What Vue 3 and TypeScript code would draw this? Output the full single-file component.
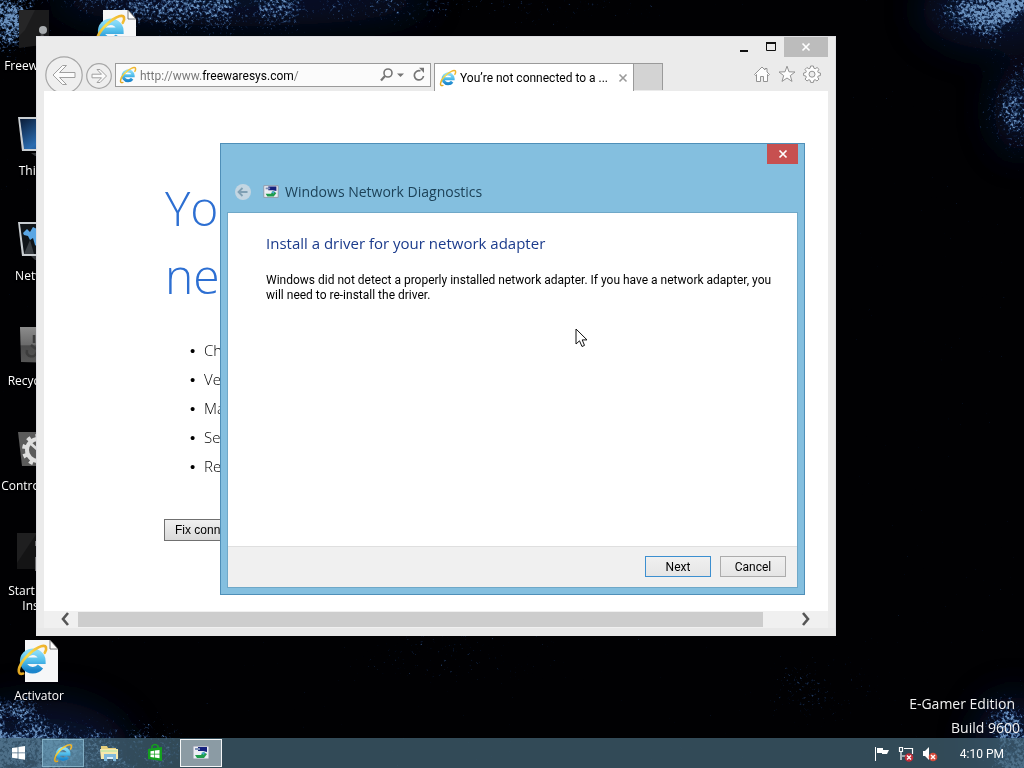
<script setup lang="ts">
interface DesktopItem {
  label: string
  icon: string
}

const desktopItems: DesktopItem[] = [
  { label: 'Freewaresys', icon: 'i-dark' },
  { label: 'This PC', icon: 'i-pc' },
  { label: 'Network', icon: 'i-net' },
  { label: 'Recycle Bin', icon: 'i-bin' },
  { label: 'Control Panel', icon: 'i-panel' },
  { label: 'Start in the Install', icon: 'i-start' },
  { label: 'Activator', icon: 'i-iepage' },
  { label: '', icon: 'i-iepage' },
]

const tips: string[] = [
  'Check that all network cables are plugged in.',
  'Verify that airplane mode is turned off.',
  'Make sure your wireless switch is turned on.',
  'See if you can connect to mobile broadband.',
  'Restart your router.',
]

interface TaskButton {
  name: string
  icon: string
  state: string
}

const taskButtons: TaskButton[] = [
  { name: 'Internet Explorer', icon: 'i-ie', state: 'open' },
  { name: 'File Explorer', icon: 'i-folder', state: '' },
  { name: 'Store', icon: 'i-store', state: '' },
  { name: 'Windows Network Diagnostics', icon: 'i-diag', state: 'active' },
]
</script>

<template>
  <div class="screen">
    <svg class="defs" aria-hidden="true">
      <defs>
        <linearGradient id="g-ie" x1="0" y1="0" x2="0" y2="1">
          <stop offset="0" stop-color="#8adcf8" />
          <stop offset="0.5" stop-color="#4fbcea" />
          <stop offset="1" stop-color="#1c86cc" />
        </linearGradient>
        <linearGradient id="g-gold" x1="0" y1="1" x2="1" y2="0">
          <stop offset="0" stop-color="#e0a21c" />
          <stop offset="0.5" stop-color="#fbe04e" />
          <stop offset="1" stop-color="#eeb02a" />
        </linearGradient>
        <linearGradient id="g-screen" x1="0" y1="0" x2="1" y2="1">
          <stop offset="0" stop-color="#0a1c38" />
          <stop offset="0.6" stop-color="#2a6cb0" />
          <stop offset="1" stop-color="#143a6c" />
        </linearGradient>
        <linearGradient id="g-bin" x1="0" y1="0" x2="0" y2="1">
          <stop offset="0" stop-color="#8c8c8c" />
          <stop offset="0.5" stop-color="#6a6a6a" />
          <stop offset="0.52" stop-color="#4a4a4a" />
          <stop offset="1" stop-color="#565656" />
        </linearGradient>
      </defs>
      <symbol id="i-ie" viewBox="0 0 32 32">
        <path d="M9 17.500H25.200A9 8.700 0 1 0 23.400 22.600" fill="none" stroke="url(#g-ie)" stroke-width="5.400" />
        <path d="M7 29.200C.4 31.500 1.400 22 9.600 13.400C17.800 4.800 28 .3 29.400 4.200C30 6 29.200 8 28.200 9.600" fill="none" stroke="url(#g-gold)" stroke-width="2.600" stroke-linecap="round" />
      </symbol>
      <symbol id="i-iepage" viewBox="0 0 48 48">
        <path d="M10 2H35L43 11V44H10Z" fill="#f6f7f8" />
        <path d="M35 2V11H43Z" fill="#fff" stroke="#555" stroke-width="0.8" />
        <g transform="translate(1 5) scale(1.02)">
          <path d="M9 17.500H25.800A9.400 9 0 1 0 24 23" fill="none" stroke="url(#g-ie)" stroke-width="6.400" />
          <path d="M7 30C.4 32 1.400 23 9.600 14C17.800 5 28 .3 29.400 4.200C30 6 29.200 8 28.200 9.600" fill="none" stroke="url(#g-gold)" stroke-width="2.600" stroke-linecap="round" />
        </g>
      </symbol>
      <symbol id="i-dark" viewBox="0 0 48 48">
        <path d="M4 2H34V36L4 40Z" fill="#1b1b1c" />
        <path d="M4 2H20L10 22L4 28Z" fill="#262627" />
        <circle cx="28" cy="22" r="4" fill="#a9adb0" />
        <path d="M27 26L29 44" stroke="#48484a" stroke-width="3" />
      </symbol>
      <symbol id="i-pc" viewBox="0 0 48 48">
        <path d="M3 4H46V38H7Z" fill="#c9ced2" />
        <path d="M5 6H46V36H9Z" fill="url(#g-screen)" />
        <path d="M16 40H40V43H20Z" fill="#33363a" />
      </symbol>
      <symbol id="i-net" viewBox="0 0 48 48">
        <path d="M3 4H46V38H7Z" fill="#c9ced2" />
        <path d="M5 6H46V36H9Z" fill="#101418" />
        <path d="M8 15L12 11L15 14L18 9L24 12V30L20 27L18 20L15 22L13 18L9 17Z" fill="#5aa6e4" />
        <path d="M9 36L15 22L19 36Z" fill="#3a3f44" />
        <path d="M16 38H40V42H20Z" fill="#33363a" />
      </symbol>
      <symbol id="i-bin" viewBox="0 0 48 48">
        <path d="M5 4H42V40L6 39Z" fill="url(#g-bin)" />
        <path d="M19 12V20M12 27C10 34 20 36 22 29M16 22L21 26" fill="none" stroke="#3c3c3c" stroke-width="2.500" />
      </symbol>
      <symbol id="i-panel" viewBox="0 0 48 48">
        <path d="M3 4H44V38H7Z" fill="#5b5b5b" />
        <circle cx="23" cy="22" r="11" fill="none" stroke="#dedede" stroke-width="4" />
        <circle cx="23" cy="22" r="14" fill="none" stroke="#dedede" stroke-width="4" stroke-dasharray="4 5" />
        <path d="M23 22L14 14M23 22L23 10" stroke="#dedede" stroke-width="3" />
      </symbol>
      <symbol id="i-start" viewBox="0 0 48 48">
        <path d="M2 0H40V36H2Z" fill="#141415" />
        <path d="M2 0H22L10 18L2 30Z" fill="#1f1f20" />
        <path d="M21 8V13M21 24V38" stroke="#6a6a6c" stroke-width="2" />
      </symbol>
      <symbol id="i-folder" viewBox="0 0 20 20">
        <path d="M2 3H8L9 5H17V8H2Z" fill="#e7cf7c" />
        <path d="M1 6H19V16H2Z" fill="#f6e8ac" />
        <path d="M2 7H18V9H2Z" fill="#cfe6a8" />
        <path d="M5 11H17V18H14V14H8V18H5Z" fill="#7fb8dc" />
        <path d="M8 14H14V16H8Z" fill="#d8ecf8" />
      </symbol>
      <symbol id="i-store" viewBox="0 0 20 20">
        <path d="M3 6L17 4V18L3 16Z" fill="#14a01e" />
        <path d="M7 6V3Q10 0 13 3V5" fill="none" stroke="#14a01e" stroke-width="1.500" />
        <path d="M5.500 8.200L9 7.700V10.700H5.500ZM9.700 7.600L14.500 6.900V10.700H9.700ZM5.500 11.400H9V14.400L5.500 13.900ZM9.700 11.400H14.500V15.200L9.700 14.500Z" fill="#fff" />
      </symbol>
      <symbol id="i-diag" viewBox="0 0 20 20">
        <path d="M2 3H18V16H2Z" fill="#eceef4" stroke="#8f96a6" stroke-width="1" />
        <path d="M7 4H16V9L12 8L7 8Z" fill="#15207e" />
        <path d="M4 5H9V7H4Z" fill="#7d8fb8" />
        <path d="M4 12L10 12L12 9L16 11L13 15H6Z" fill="#1f9c4c" />
        <path d="M10 10L14 9L13 12Z" fill="#4aa8d8" />
      </symbol>
    </svg>

    <svg class="wallpaper" viewBox="0 0 1024 768" preserveAspectRatio="none" aria-hidden="true">
      <defs>
        <filter id="f-dust" filterUnits="userSpaceOnUse" x="0" y="0" width="1024" height="768" color-interpolation-filters="sRGB">
          <feGaussianBlur in="SourceGraphic" stdDeviation="16" result="cloud" />
          <feTurbulence type="fractalNoise" baseFrequency="0.03" numOctaves="4" seed="23" />
          <feColorMatrix type="matrix" values="2.500 0 0 0 -0.5  2.500 0 0 0 -0.5  2.500 0 0 0 -0.5  0 0 0 0 1" result="patch" />
          <feComposite in="cloud" in2="patch" operator="arithmetic" k1="0.9" k2="0.2" result="shape" />
          <feTurbulence type="fractalNoise" baseFrequency="0.34" numOctaves="3" seed="7" />
          <feColorMatrix type="matrix" values="0.900 0 0 0 -0.1  0.900 0 0 0 -0.1  0.900 0 0 0 -0.1  0 0 0 0 1" result="grain" />
          <feComposite in="shape" in2="grain" operator="arithmetic" k2="0.62" k3="1" />
          <feColorMatrix type="matrix" values="1.200 0 0 0 -0.78  1.300 0 0 0 -0.73  1.200 0 0 0 -0.46  3.200 0 0 0 -2.050" />
        </filter>
        <filter id="f-soft" x="-50%" y="-50%" width="200%" height="200%">
          <feGaussianBlur stdDeviation="18" />
        </filter>
      </defs>
      <rect width="1024" height="768" fill="#010103" />
      <g filter="url(#f-soft)" fill="#0c1a44" opacity="0.6">
        <ellipse cx="240" cy="0" rx="190" ry="26" />
        <ellipse cx="1000" cy="10" rx="80" ry="40" />
        <ellipse cx="1020" cy="110" rx="26" ry="44" />
        <ellipse cx="40" cy="750" rx="90" ry="50" />
        <ellipse cx="1014" cy="745" rx="40" ry="50" />
      </g>
      <g filter="url(#f-dust)" fill="#fff">
        <ellipse cx="4" cy="16" rx="38" ry="34" />
        <ellipse cx="200" cy="4" rx="150" ry="24" opacity="0.8" />
        <ellipse cx="400" cy="0" rx="60" ry="18" opacity="0.6" />
        <ellipse cx="560" cy="0" rx="120" ry="14" opacity="0.4" />
        <ellipse cx="1004" cy="8" rx="66" ry="30" />
        <ellipse cx="1024" cy="105" rx="30" ry="44" opacity="0.9" />
        <ellipse cx="6" cy="750" rx="60" ry="52" />
        <ellipse cx="110" cy="755" rx="80" ry="34" opacity="0.7" />
        <ellipse cx="1020" cy="748" rx="36" ry="52" />
        <ellipse cx="820" cy="690" rx="60" ry="24" opacity="0.4" />
        <ellipse cx="450" cy="655" rx="110" ry="16" opacity="0.4" />
      </g>
    </svg>

    <main class="desktop">
      <ul class="shortcuts">
        <li v-for="(item, i) in desktopItems" :key="i">
          <svg class="shortcut-icon"><use :href="'#' + item.icon" /></svg>
          <span>{{ item.label }}</span>
        </li>
      </ul>

      <div class="watermark">
        <p class="edition">E-Gamer Edition</p>
        <p>Build 9600</p>
      </div>

      <section class="browser" aria-label="Internet Explorer">
        <div class="caption">
          <button class="cap-btn" aria-label="Minimize">
            <svg width="12" height="12"><path d="M2 9H10V11H2Z" fill="#111" /></svg>
          </button>
          <button class="cap-btn" aria-label="Maximize">
            <svg width="12" height="12"><path d="M1.500 2H10.500V9.500H1.500Z" fill="none" stroke="#111" /><path d="M1 1H11V3H1Z" fill="#111" /></svg>
          </button>
          <button class="cap-btn cap-close" aria-label="Close">
            <svg width="12" height="12"><path d="M2.500 2.500L9.500 9.500M9.500 2.500L2.500 9.500" stroke="#fff" stroke-width="1.700" /></svg>
          </button>
        </div>

        <div class="toolbar">
          <button class="nav-btn nav-back" aria-label="Back">
            <svg width="38" height="38">
              <circle cx="19" cy="19" r="18.200" fill="#efefef" stroke="#a6a6a6" stroke-width="1.200" />
              <path d="M8 19L17.500 9.500H21.500L14.500 16.500H30V21.500H14.500L21.500 28.500H17.500Z" fill="#fbfbfb" stroke="#a0a0a0" />
            </svg>
          </button>
          <button class="nav-btn" aria-label="Forward">
            <svg width="26" height="26">
              <circle cx="13" cy="13" r="12.300" fill="#efefef" stroke="#a6a6a6" stroke-width="1.200" />
              <path d="M20.500 13L14 6.500H11L15.500 11.200H6V14.800H15.500L11 19.500H14Z" fill="#fbfbfb" stroke="#a0a0a0" />
            </svg>
          </button>
          <div class="address">
            <svg class="ie-small"><use href="#i-ie" /></svg>
            <input class="url" type="text" aria-label="Address" value="http://www.freewaresys.com/" />
            <button class="icon-btn" aria-label="Search">
              <svg width="16" height="16"><circle cx="9" cy="6" r="4" fill="none" stroke="#757575" stroke-width="1.600" /><path d="M6 9L2 13.500" stroke="#757575" stroke-width="2.200" /></svg>
            </button>
            <button class="icon-btn options" aria-label="Search options">
              <svg width="12" height="16"><path d="M2 6.500H9L5.500 10Z" fill="#757575" /></svg>
            </button>
            <button class="icon-btn" aria-label="Refresh">
              <svg width="16" height="16"><path d="M12.500 9A4.600 4.600 0 1 1 9.500 4" fill="none" stroke="#757575" stroke-width="1.700" /><path d="M8 .8H13V6Z" fill="#757575" /></svg>
            </button>
          </div>
          <div class="tab">
            <svg class="ie-small"><use href="#i-ie" /></svg>
            <span class="tab-title">You’re not connected to a ...</span>
            <button class="icon-btn" aria-label="Close tab">
              <svg width="12" height="12"><path d="M2.500 2.500L9.500 9.500M9.500 2.500L2.500 9.500" stroke="#9a9a9a" stroke-width="1.600" /></svg>
            </button>
          </div>
          <button class="new-tab" aria-label="New tab"></button>
          <div class="tools">
            <button class="icon-btn" aria-label="Home">
              <svg width="18" height="18"><path d="M1.500 9.500L9 2L12 5V3.500H14V7L16.500 9.500L15.500 10.500L14.500 9.500V16.500H10.500V11.500H7.500V16.500H3.500V9.500L2.500 10.500Z" fill="#fdfdfd" stroke="#939393" /></svg>
            </button>
            <button class="icon-btn" aria-label="Favorites">
              <svg width="18" height="18"><path d="M9 1.200L11 6.800L17 7L12.300 10.600L14 16.400L9 13L4 16.400L5.700 10.600L1 7L7 6.800Z" fill="#fdfdfd" stroke="#939393" /></svg>
            </button>
            <button class="icon-btn" aria-label="Tools">
              <svg width="18" height="18"><path d="M7.600 1H10.400L10.900 3.200L12.200 3.700L14.100 2.500L16 4.400L14.700 6.200L15.200 7.500L17.400 8V10.500L15.200 11L14.700 12.200L15.900 14.100L14 16L12.100 14.700L10.900 15.200L10.400 17.400H7.600L7.100 15.200L5.900 14.700L4 16L2.100 14.100L3.300 12.200L2.800 11L.6 10.500V8L2.800 7.500L3.300 6.200L2 4.400L3.900 2.500L5.800 3.700L7.100 3.200Z" fill="#fdfdfd" stroke="#939393" /><circle cx="9" cy="9.200" r="3" fill="#ececec" stroke="#939393" /></svg>
            </button>
          </div>
        </div>

        <div class="viewport">
          <article class="page">
            <h1>You’re not connected to a<br />network</h1>
            <ul class="tips">
              <li v-for="tip in tips" :key="tip">{{ tip }}</li>
            </ul>
            <button class="fix">Fix connection problems</button>
          </article>
          <div class="scrollbar">
            <button class="icon-btn arrow-left" aria-label="Scroll left">
              <svg width="12" height="14"><path d="M9 1L4 7L9 13" fill="none" stroke="#555" stroke-width="2.600" /></svg>
            </button>
            <div class="track"><div class="thumb"></div></div>
            <button class="icon-btn arrow-right" aria-label="Scroll right">
              <svg width="12" height="14"><path d="M3 1L8 7L3 13" fill="none" stroke="#555" stroke-width="2.600" /></svg>
            </button>
          </div>
        </div>
      </section>

      <section class="dialog" role="dialog" aria-labelledby="dlg-title">
        <div class="dlg-caption">
          <button class="dlg-close" aria-label="Close">
            <svg width="12" height="12"><path d="M2.500 2.500L9.500 9.500M9.500 2.500L2.500 9.500" stroke="#fff" stroke-width="1.700" /></svg>
          </button>
        </div>
        <header class="dlg-header">
          <button class="icon-btn" aria-label="Previous step">
            <svg width="18" height="18"><circle cx="9" cy="9" r="8" fill="#c3d6e2" /><path d="M4.500 9H13.500M8.500 5L4.500 9L8.500 13" fill="none" stroke="#7fa0b4" stroke-width="1.800" /></svg>
          </button>
          <svg class="dlg-icon"><use href="#i-diag" /></svg>
          <h2 id="dlg-title">Windows Network Diagnostics</h2>
        </header>
        <div class="dlg-client">
          <div class="dlg-body">
            <h3>Install a driver for your network adapter</h3>
            <p>Windows did not detect a properly installed network adapter. If you have a network adapter, you<br />will need to re-install the driver.</p>
          </div>
          <footer class="dlg-footer">
            <button class="push push-default">Next</button>
            <button class="push">Cancel</button>
          </footer>
        </div>
      </section>

      <svg class="cursor" width="14" height="20" aria-hidden="true">
        <path d="M1 1V16L4.500 12.800L7 18.500L9.500 17.400L7.200 11.900H12Z" fill="#fff" stroke="#111" />
      </svg>
    </main>

    <nav class="taskbar">
      <button class="task start" aria-label="Start">
        <svg width="14" height="14"><path d="M0 2L5.600 1.200V6.500H0ZM6.400 1.100L13 0V6.500H6.400ZM0 7.300H5.600V12.600L0 11.800ZM6.400 7.300H13V13.800L6.400 12.700Z" fill="#fff" /></svg>
      </button>
      <button v-for="b in taskButtons" :key="b.name" class="task" :class="b.state" :aria-label="b.name">
        <svg class="task-icon"><use :href="'#' + b.icon" /></svg>
      </button>
      <div class="tray">
        <svg width="16" height="16"><path d="M1 1H2V15H1Z" fill="#fff" /><path d="M3 2H9V4H15L13 8H8V7H3Z" fill="#fff" /></svg>
        <svg width="16" height="16">
          <path d="M1.500 1.500H4.500V5.500H1.500ZM3 6V14M6 2.500H14.500V8M4 10H8" fill="none" stroke="#fff" stroke-width="1.200" />
          <circle cx="11" cy="11.500" r="4.300" fill="#c22c38" /><path d="M9 9.500L13 13.500M13 9.500L9 13.500" stroke="#fff" stroke-width="1.400" />
        </svg>
        <svg width="16" height="16">
          <path d="M1 5H3L7 1V14L3 10H1Z" fill="#fff" />
          <circle cx="11" cy="11" r="4.300" fill="#d64a3a" /><path d="M9 9L13 13M13 9L9 13" stroke="#fff" stroke-width="1.400" />
        </svg>
        <time>4:10 PM</time>
      </div>
    </nav>
  </div>
</template>

<style>
html,
body {
  margin: 0;
  background: #000;
}
</style>

<style scoped>
.screen {
  position: relative;
  display: flex;
  flex-direction: column;
  height: 100vh;
  overflow: hidden;
  font: 12px/15px Roboto, "Open Sans", sans-serif;
  color: #000;
}
.screen * {
  box-sizing: border-box;
}
.defs {
  position: absolute;
  width: 0;
  height: 0;
}
.wallpaper {
  position: absolute;
  inset: 0;
  width: 100%;
  height: 100%;
}
button {
  font: inherit;
  padding: 0;
  border: 0;
  background: none;
  color: inherit;
}
svg {
  display: block;
  flex: none;
}
h1,
h2,
h3,
p,
ul {
  margin: 0;
  padding: 0;
  font-weight: 400;
}
h1,
h2,
h3,
.tips,
.watermark,
.shortcuts {
  font-family: "Open Sans", "Noto Sans", sans-serif;
}
.icon-btn {
  display: flex;
  align-items: center;
  justify-content: center;
  flex: none;
}

/* Desktop */
.desktop {
  position: relative;
  flex: 1;
  min-height: 0;
}
.shortcuts {
  display: grid;
  grid-auto-flow: column;
  grid-template-rows: repeat(7, 105px);
  grid-auto-columns: 78px;
  list-style: none;
  color: #fff;
  text-align: center;
  text-shadow: 0 1px 2px #000;
}
.shortcuts li {
  display: flex;
  flex-direction: column;
  align-items: center;
  padding-top: 8px;
}
.shortcut-icon {
  width: 48px;
  height: 48px;
  margin-bottom: 2px;
}
.watermark {
  position: absolute;
  right: 4px;
  bottom: -2px;
  font-size: 14px;
  line-height: 24px;
  text-align: right;
  color: #f2f2f2;
}
.edition {
  padding-right: 5px;
}

/* Browser window */
.browser {
  position: absolute;
  inset: 36px 188px 102px 36px;
  display: flex;
  flex-direction: column;
  padding: 0 7px;
  background: #ebebeb;
  border: 1px solid #dedee2;
  border-bottom: 8px solid #e8e8e8;
}
.caption {
  display: flex;
  justify-content: flex-end;
  height: 26px;
  flex: none;
}
.cap-btn {
  display: flex;
  align-items: center;
  justify-content: center;
  width: 27px;
  height: 20px;
}
.cap-close {
  width: 44px;
  background: #bcbcbc;
}
.toolbar {
  display: flex;
  align-items: flex-start;
  gap: 3px;
  height: 28px;
  flex: none;
}
.nav-btn {
  flex: none;
}
.nav-back {
  margin: -7px 0 0 1px;
}
.address {
  display: flex;
  align-items: center;
  flex: 0 1 316px;
  min-width: 0;
  height: 24px;
  padding: 0 3px;
  background: #fbfbfb;
  border: 1px solid #9a9a9a;
}
.ie-small {
  width: 18px;
  height: 18px;
}
.url {
  flex: 1;
  min-width: 0;
  padding: 2px 0 0 3px;
  border: 0;
  outline: 0;
  font: inherit;
  color: transparent;
  background: linear-gradient(90deg, #757575 65px, #000 65px, #000 157px, #757575 157px);
  background-clip: text;
  -webkit-background-clip: text;
}
.options {
  margin-right: 4px;
}
.tab {
  display: flex;
  align-items: center;
  flex: 0 1 200px;
  min-width: 0;
  height: 28px;
  padding: 0 4px;
  background: #fff;
  border: 1px solid #9a9a9a;
  border-bottom: 0;
}
.tab-title {
  flex: 1;
  min-width: 0;
  padding: 2px 0 0 3px;
  overflow: hidden;
  white-space: nowrap;
}
.new-tab {
  width: 30px;
  height: 27px;
  margin-left: -4px;
  background: #d3d3d3;
  border: 1px solid #9a9a9a;
  border-bottom: 0;
}
.tools {
  display: flex;
  gap: 7px;
  margin-left: auto;
  padding: 2px 7px 0 0;
}
.viewport {
  position: relative;
  display: flex;
  flex-direction: column;
  flex: 1;
  min-height: 0;
  background: #fff;
}
.page {
  flex: 1;
  min-height: 0;
  overflow: hidden;
  padding: 83px 0 0 121px;
}
h1 {
  font-size: 48px;
  font-weight: 300;
  line-height: 68px;
  color: #2d6fd2;
  white-space: nowrap;
}
.tips {
  margin-top: 26px;
  padding-left: 25px;
  list-style: none;
  font-size: 15px;
  font-weight: 300;
  line-height: 29px;
}
.tips li {
  display: flex;
}
.tips li::before {
  content: "•";
  width: 14px;
  font-family: "Liberation Sans", Arial, sans-serif;
}
.fix {
  height: 22px;
  margin: 38px 0 0 -1px;
  padding: 0 10px;
  border: 1px solid #707070;
  background: linear-gradient(#f0f0f0, #d9d9d9);
  font: 12px/20px "Liberation Sans", Arial, sans-serif;
}
.scrollbar {
  display: flex;
  height: 17px;
  flex: none;
  padding-bottom: 1px;
  background: #f0f0f0;
}
.arrow-left {
  width: 34px;
  padding-left: 8px;
}
.arrow-right {
  width: 44px;
}
.track {
  flex: 1;
}
.thumb {
  width: 97%;
  height: 15px;
  margin-top: 1px;
  background: #cdcdcd;
}

/* Diagnostics dialog */
.dialog {
  position: absolute;
  inset: 143px 219px 143px 220px;
  display: flex;
  flex-direction: column;
  padding: 0 6px 6px;
  background: #84bfdf;
  border: 1px solid #4f8fb8;
}
.dlg-caption {
  display: flex;
  justify-content: flex-end;
  flex: none;
}
.dlg-close {
  display: flex;
  align-items: center;
  justify-content: center;
  width: 31px;
  height: 20px;
  background: #c75050;
}
.dlg-header {
  display: flex;
  align-items: center;
  height: 48px;
  padding: 7px 0 0 7px;
  flex: none;
}
.dlg-icon {
  width: 18px;
  height: 18px;
  margin: 0 5px 0 10px;
}
h2 {
  font-size: 14px;
  line-height: 20px;
  color: #1d4258;
}
.dlg-client {
  display: flex;
  flex-direction: column;
  flex: 1;
  min-height: 0;
  background: #fff;
  border: 1px solid #6fa8c8;
}
.dlg-body {
  flex: 1;
  padding: 20px 0 0 38px;
}
h3 {
  margin-bottom: 20px;
  font-size: 15px;
  line-height: 20px;
  color: #1b3b8c;
}
.dlg-body p {
  white-space: nowrap;
}
.dlg-footer {
  display: flex;
  justify-content: flex-end;
  align-items: center;
  gap: 9px;
  height: 41px;
  padding: 0 11px 2px 0;
  background: #f0f0f0;
  border-top: 1px solid #dfdfdf;
}
.push {
  width: 66px;
  height: 21px;
  padding-top: 2px;
  border: 1px solid #acacac;
  background: linear-gradient(#f0f0f0, #e5e5e5);
}
.push-default {
  border-color: #3c8fd0;
}
.cursor {
  position: absolute;
  left: 575px;
  top: 328px;
}

/* Taskbar */
.taskbar {
  position: relative;
  display: flex;
  gap: 4px;
  height: 30px;
  flex: none;
  background: rgba(68, 100, 118, 0.74);
}
.task {
  display: flex;
  align-items: center;
  justify-content: center;
  width: 42px;
  height: 28px;
  margin-top: 1px;
}
.start {
  width: 38px;
}
.task-icon {
  width: 20px;
  height: 20px;
}
.open {
  background: rgba(110, 165, 195, 0.5);
  border: 1px solid rgba(150, 195, 215, 0.7);
}
.active {
  background: #8b9ba4;
  border: 1px solid #f4f6f7;
}
.tray {
  display: flex;
  align-items: center;
  gap: 8px;
  margin-left: auto;
  padding: 2px 20px 0 0;
  color: #fff;
}
.tray time {
  margin-left: 14px;
}
</style>
